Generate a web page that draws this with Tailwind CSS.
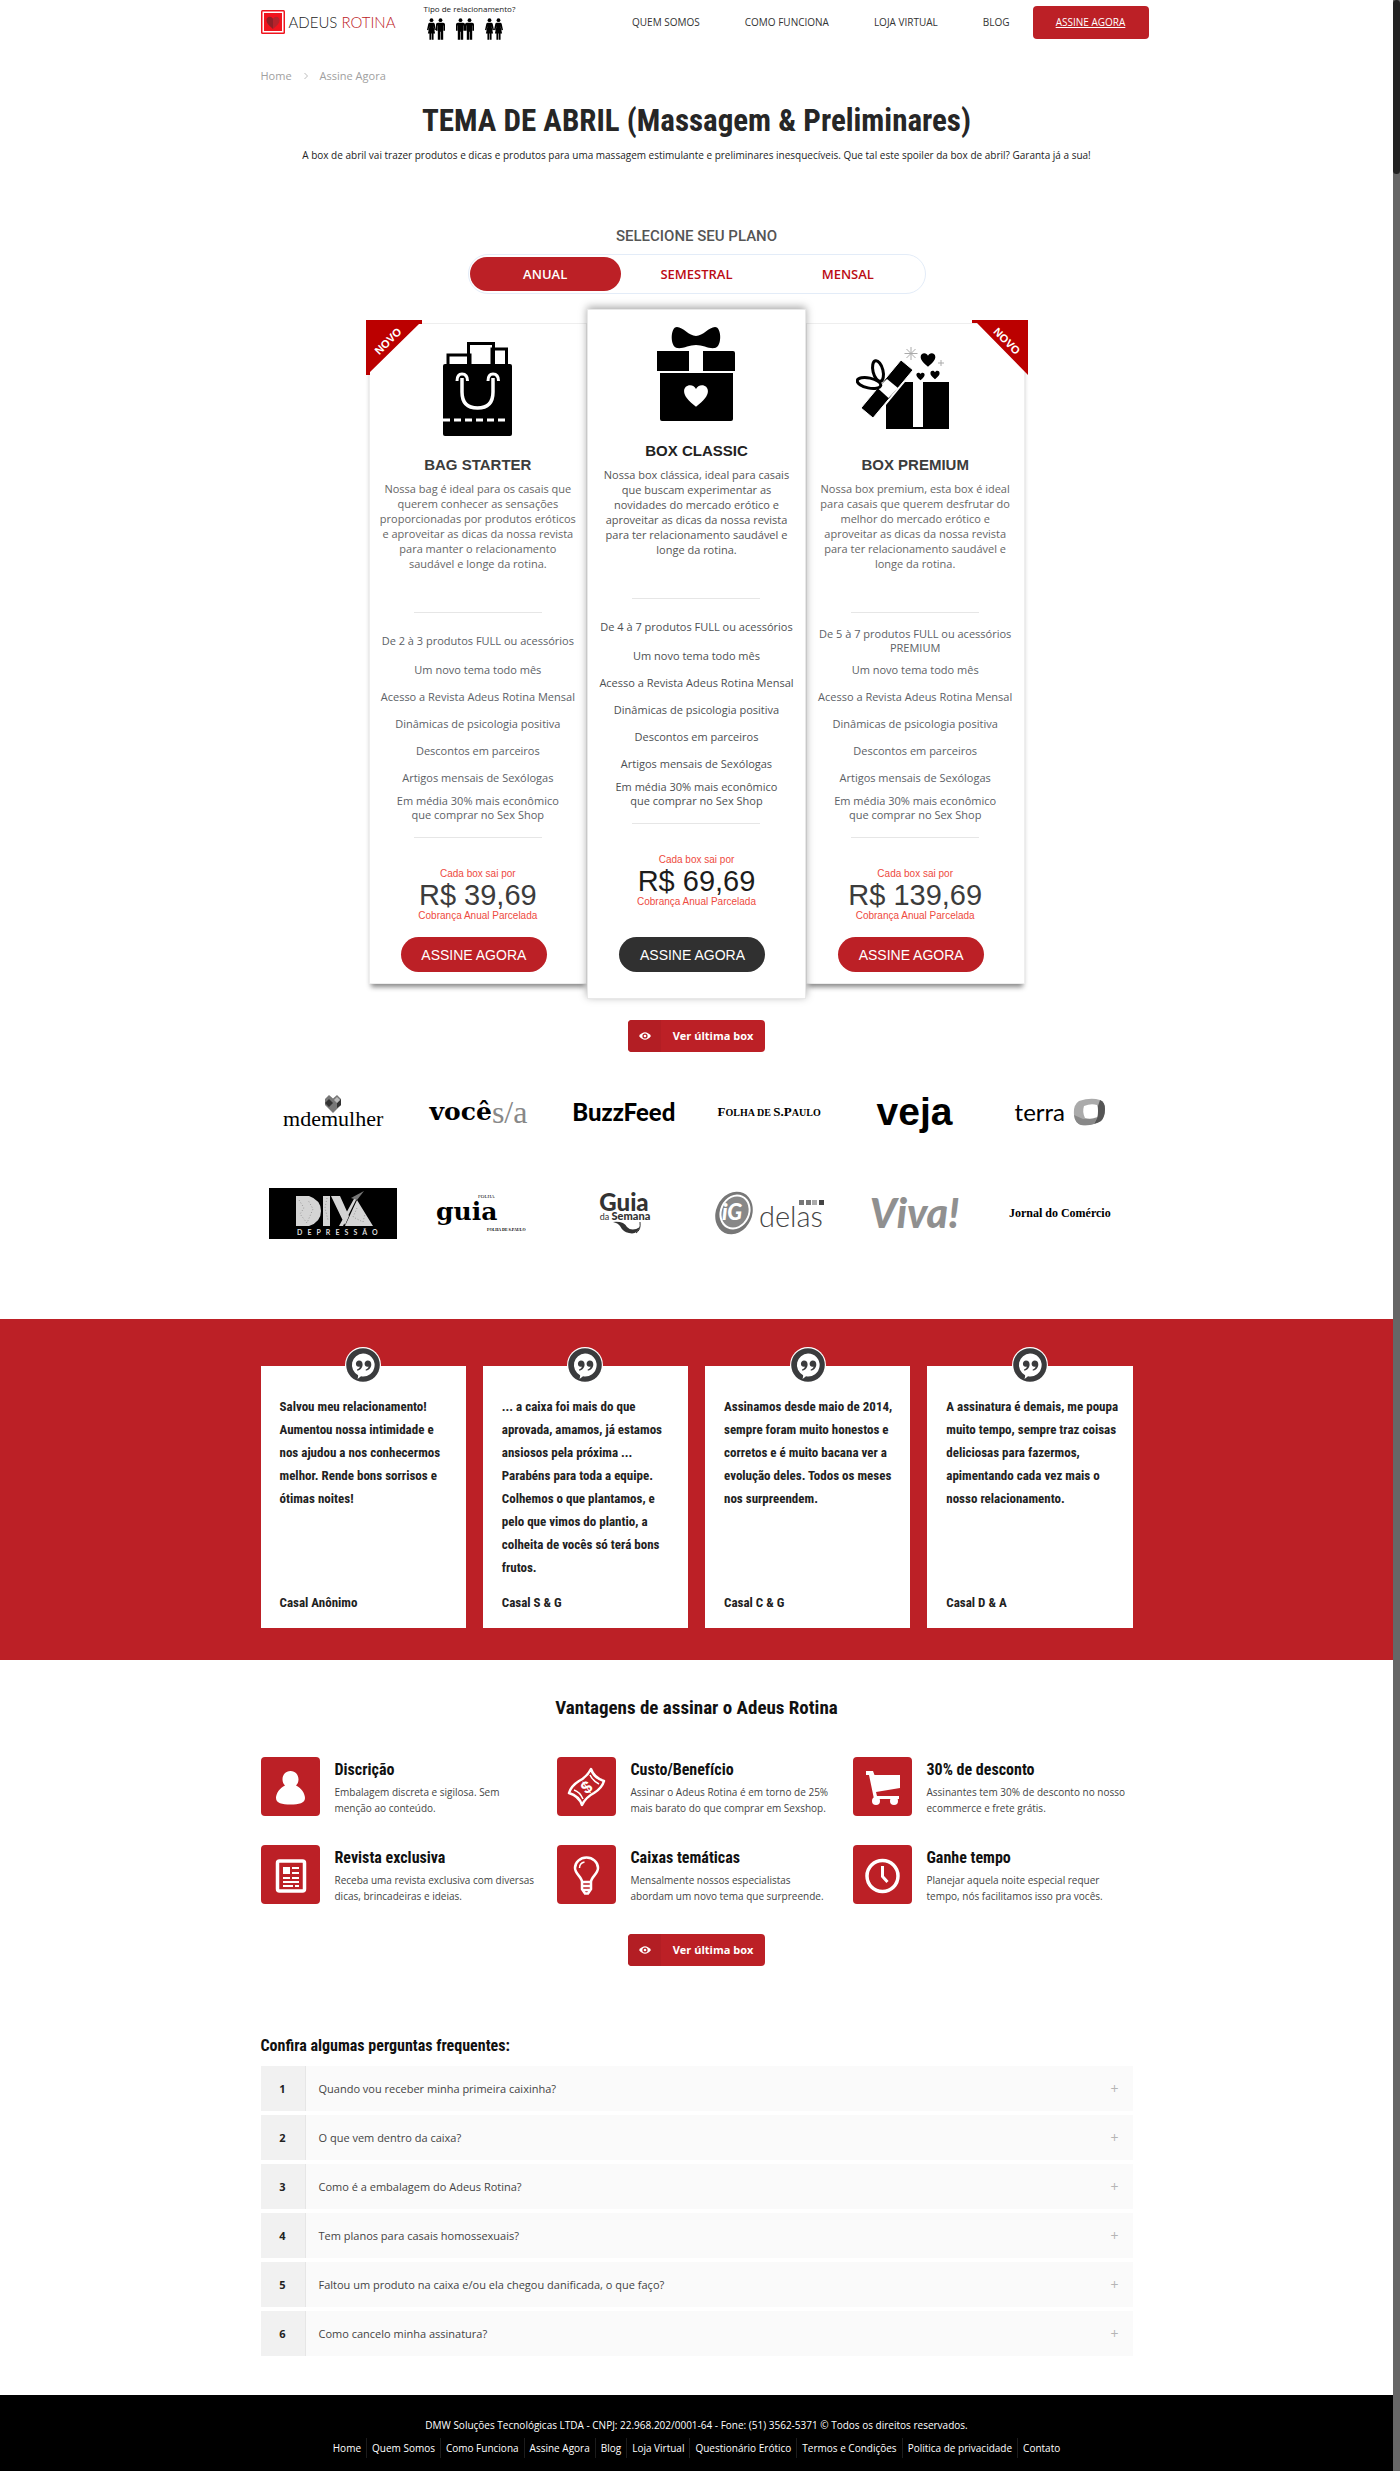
<!DOCTYPE html>
<html lang="pt-BR">
<head>
<meta charset="utf-8">
<meta name="viewport" content="width=device-width, initial-scale=1">
<title>Assine Agora - Adeus Rotina</title>
<script src="https://cdn.jsdelivr.net/npm/@tailwindcss/browser@4"></script>
</head>
<body class="flex bg-white font-['Open_Sans',sans-serif] text-[11px] leading-4 text-[#444]">

<svg class="hidden" aria-hidden="true">
  <symbol id="man" viewBox="0 0 10 24"><circle cx="5" cy="2.2" r="2.1"/><path d="M2 5h6q2 0 2 2v7H8.300V8H8v16H5.300v-9h-.6v9H2V8h-.3v6H0V7q0-2 2-2z"/></symbol>
  <symbol id="woman" viewBox="0 0 10 24"><circle cx="5" cy="2.200" r="2.100"/><path d="M3 5h4q1.200 0 1.600 1.500L10 13l-1.500.5L7 8l2 9H7.300v7H5.300v-7h-.6v7h-2v-7H1L3 8l-1.500 5.500L0 13l1.400-6.500Q1.800 5 3 5z"/></symbol>
  <symbol id="eye" viewBox="0 0 12 8"><path d="M0 4Q6-3.500 12 4 6 11.500 0 4z" fill="#fff"/><circle cx="6" cy="4" r="2.600" fill="#b31e24"/><circle cx="6" cy="4" r="1.300" fill="#fff"/></symbol>
  <symbol id="heart" viewBox="0 0 24 24"><path d="M12 22C5 16 1 12 1 7.500 1 4 3.500 2 6.500 2 9 2 11 3.500 12 5.500 13 3.500 15 2 17.500 2 20.500 2 23 4 23 7.500 23 12 19 16 12 22z"/></symbol>
  <symbol id="quote" viewBox="0 0 36 36"><circle cx="18" cy="18" r="18" fill="#fff"/><circle cx="18" cy="18" r="16.800" fill="#3a3b3d"/><path d="M18 6.500a11.500 11.500 0 1 1-2 22.800Q14 31 12.500 32q.8-2 .6-3.800A11.500 11.500 0 0 1 18 6.500z" fill="#fff"/><path d="M14 13.500c2.300 0 3.600 1.600 3.600 3.900 0 3.200-2.500 5.800-5.600 6.200v-1.200c1.700-.5 2.700-1.600 2.900-3-.3.200-.8.300-1.300.3-1.500 0-2.700-1.300-2.700-3s1.400-3.200 3.100-3.200zM22.700 13.500c2.300 0 3.600 1.600 3.600 3.900 0 3.200-2.500 5.800-5.600 6.200v-1.200c1.700-.5 2.700-1.600 2.900-3-.3.200-.8.300-1.300.3-1.500 0-2.700-1.300-2.700-3s1.400-3.200 3.100-3.200z" fill="#3a3b3d"/></symbol>
</svg>

<div class="min-w-0 flex-1">
  <header class="mx-auto flex h-11 max-w-[872px] items-center">
    <a href="#" class="flex items-center gap-1 font-['Lato',sans-serif] text-[15px] font-light text-[#222]">
      <svg class="size-6" viewBox="0 0 24 24"><rect width="24" height="24" rx="1.500" fill="#f0141e"/><rect x="1.500" y="1.500" width="21" height="21" fill="#fff"/><rect x="3" y="3" width="18" height="18" fill="#f0141e"/><path d="M12 19C7 15 5.500 12.500 5.500 10c0-2 1.400-3.300 3.200-3.300 1.500 0 2.600.8 3.300 2.100z" fill="#8f2027"/><path d="M12 19c5-4 6.500-6.500 6.500-9 0-2-1.400-3.300-3.200-3.300-1.500 0-2.600.8-3.300 2.100z" fill="#b5232b"/></svg>
      <span class="whitespace-nowrap">ADEUS <span class="text-[#bc2026]">ROTINA</span></span>
    </a>
    <a href="#" class="ml-7 flex flex-col items-start text-[8px] leading-[10px] whitespace-nowrap text-[#222]">
      Tipo de relacionamento?
      <span class="mt-[3px] ml-[3px] flex gap-[11px] text-black">
        <span class="flex"><svg class="h-6 w-[9px]" fill="currentColor"><use href="#woman"/></svg><svg class="h-6 w-[9px]" fill="currentColor"><use href="#man"/></svg></span>
        <span class="flex"><svg class="h-6 w-[9px]" fill="currentColor"><use href="#man"/></svg><svg class="h-6 w-[9px]" fill="currentColor"><use href="#man"/></svg></span>
        <span class="flex"><svg class="h-6 w-[9px]" fill="currentColor"><use href="#woman"/></svg><svg class="h-6 w-[9px]" fill="currentColor"><use href="#woman"/></svg></span>
      </span>
    </a>
    <nav class="-mr-4 ml-auto flex items-center text-[10px] whitespace-nowrap text-[#333]">
      <a href="#" class="mr-[45px]">QUEM SOMOS</a>
      <a href="#" class="mr-[45px]">COMO FUNCIONA</a>
      <a href="#" class="mr-[45px]">LOJA VIRTUAL</a>
      <a href="#" class="mr-[23px]">BLOG</a>
      <a href="#" class="flex h-[33px] w-[116px] items-center justify-center rounded bg-[#bc2026] text-white underline">ASSINE AGORA</a>
    </nav>
  </header>

  <main>
    <nav class="mx-auto mt-6 flex max-w-[872px] items-center text-[#a0a0a0]" aria-label="Caminho">
      <a href="#">Home</a>
      <svg class="mx-3 h-2 w-1" viewBox="0 0 4 8" fill="none" stroke="#bbb"><path d="M.5 1l3 3-3 3"/></svg>
      <a href="#">Assine Agora</a>
    </nav>

    <h1 class="mt-[17px] text-center font-['Liberation_Sans_Narrow','Roboto_Condensed','Open_Sans',sans-serif] text-[31px] leading-10 font-bold text-[#262626]">TEMA DE ABRIL (Massagem &amp; Preliminares)</h1>
    <p class="mt-1 text-center text-[10px] leading-5 text-[#222]">A box de abril vai trazer produtos e dicas e produtos para uma massagem estimulante e preliminares inesquecíveis. Que tal este spoiler da box de abril? Garanta já a sua!</p>

    <h2 class="mt-[61px] text-center font-['Roboto',sans-serif] text-[15px] leading-5 font-medium text-[#555]">SELECIONE SEU PLANO</h2>
    <div class="mx-auto mt-2 grid h-10 w-[458px] grid-cols-3 items-center rounded-full border border-[#e3ecf8] px-px font-['Open_Sans',sans-serif] text-[13px] font-semibold text-[#bb0c14]">
      <button class="h-[34px] rounded-full bg-[#bc2026] text-white">ANUAL</button>
      <button class="h-[34px] rounded-full">SEMESTRAL</button>
      <button class="h-[34px] rounded-full">MENSAL</button>
    </div>

    <section class="mx-auto mt-[15px] grid w-[656px] grid-cols-3 items-start text-center">
      <article class="relative mt-[14px] flex flex-col items-center border border-[#eee] bg-white pt-[18px] pb-[11px] shadow-[0_5px_5px_-2px_#888]">
        <svg class="absolute -top-1 -left-1 size-14" viewBox="0 0 56 56"><path d="M0 0h56v4h-3L4 52v3H0z" fill="#bb0000"/><text x="22" y="25" transform="rotate(-45 22 21)" text-anchor="middle" font-family="Liberation Sans" font-size="11" font-weight="700" fill="#fff">NOVO</text></svg>
        <svg class="h-[94px] w-[70px]" viewBox="0 0 70 94"><g fill="#fff" stroke="#000" stroke-width="3"><path d="M5 24V13h22v11M49 24V7h14.500v17M25.500 24V1.500h25V24"/></g><rect y="22" width="69" height="72" rx="2"/><g fill="none" stroke="#fff" stroke-width="3"><path d="M14 39q0-7 5-7 5.500 0 5.500 7M45 39q0-7 5-7 5.500 0 5.500 7"/><path d="M19 36v14q0 16 15.500 16T50 50V36" stroke-width="3.500"/><path d="M0 78h64" stroke-dasharray="7 4"/></g></svg>
        <h3 class="mt-[19px] font-['Liberation_Sans',sans-serif] text-[15px] leading-5 font-bold text-[#3c3c3c]">BAG STARTER</h3>
        <p class="mt-[6px] w-full px-2 leading-[15px] text-[#666]">Nossa bag é ideal para os casais que<br>querem conhecer as sensações<br>proporcionadas por produtos eróticos<br>e aproveitar as dicas da nossa revista<br>para manter o relacionamento<br>saudável e longe da rotina.</p>
        <hr class="mt-[41px] w-32 border-[#e6e6e6]">
        <ul class="w-full pt-3 leading-[14px] text-[#5c6166]">
          <li class="flex h-[31px] items-center justify-center">De 2 à 3 produtos FULL ou acessórios</li>
          <li class="flex h-[27px] items-center justify-center">Um novo tema todo mês</li>
          <li class="flex h-[27px] items-center justify-center whitespace-nowrap">Acesso a Revista Adeus Rotina Mensal</li>
          <li class="flex h-[27px] items-center justify-center">Dinâmicas de psicologia positiva</li>
          <li class="flex h-[27px] items-center justify-center">Descontos em parceiros</li>
          <li class="flex h-[27px] items-center justify-center">Artigos mensais de Sexólogas</li>
          <li class="flex h-[33px] items-center justify-center">Em média 30% mais econômico<br>que comprar no Sex Shop</li>
        </ul>
        <hr class="mt-[13px] w-32 border-[#e6e6e6]">
        <div class="mt-[29px] font-['Liberation_Sans',sans-serif] text-[10px] leading-[14px] text-[#ee4a3e]">
          <p>Cada box sai por</p>
          <p class="text-[29px] leading-7 text-[#3c3c3c]">R$ 39,69</p>
          <p>Cobrança Anual Parcelada</p>
        </div>
        <button class="mt-[14px] mr-2 h-[35px] w-[146px] rounded-full bg-[#bc2026] font-['Liberation_Sans',sans-serif] text-sm text-white">ASSINE AGORA</button>
      </article>

      <article class="relative z-10 flex flex-col items-center border border-[#e8e8e8] bg-white pt-[16px] pb-[26px] shadow-[0_-2px_8px_rgb(0_0_0/0.35)]">
        <svg class="h-24 w-20" viewBox="0 0 80 96"><path d="M40 10C33 10 27 1 21 1c-7 0-7 20 0 21 6 1 12-3 19-3s13 4 19 3c7-1 7-21 0-21-6 0-12 9-19 9z"/><path d="M1 25h32v20H1zM47 25h30q2 0 2 2v18H47zM4 47h73v46q0 2-2 2H6q-2 0-2-2z"/><use href="#heart" x="27" y="57" width="26" height="26" fill="#fff"/></svg>
        <h3 class="mt-[19px] font-['Liberation_Sans',sans-serif] text-[15px] leading-5 font-bold text-[#222]">BOX CLASSIC</h3>
        <p class="mt-[6px] w-full px-2 leading-[15px] text-[#555]">Nossa box clássica, ideal para casais<br>que buscam experimentar as<br>novidades do mercado erótico e<br>aproveitar as dicas da nossa revista<br>para ter relacionamento saudável e<br>longe da rotina.</p>
        <hr class="mt-[41px] w-32 border-[#e6e6e6]">
        <ul class="w-full pt-3 leading-[14px] text-[#4c4f52]">
          <li class="flex h-[31px] items-center justify-center">De 4 à 7 produtos FULL ou acessórios</li>
          <li class="flex h-[27px] items-center justify-center">Um novo tema todo mês</li>
          <li class="flex h-[27px] items-center justify-center whitespace-nowrap">Acesso a Revista Adeus Rotina Mensal</li>
          <li class="flex h-[27px] items-center justify-center">Dinâmicas de psicologia positiva</li>
          <li class="flex h-[27px] items-center justify-center">Descontos em parceiros</li>
          <li class="flex h-[27px] items-center justify-center">Artigos mensais de Sexólogas</li>
          <li class="flex h-[33px] items-center justify-center">Em média 30% mais econômico<br>que comprar no Sex Shop</li>
        </ul>
        <hr class="mt-[13px] w-32 border-[#e6e6e6]">
        <div class="mt-[29px] font-['Liberation_Sans',sans-serif] text-[10px] leading-[14px] text-[#ee4a3e]">
          <p>Cada box sai por</p>
          <p class="text-[29px] leading-7 text-[#1c1c1c]">R$ 69,69</p>
          <p>Cobrança Anual Parcelada</p>
        </div>
        <button class="mt-7 mr-2 h-[35px] w-[146px] rounded-full bg-[#303030] font-['Liberation_Sans',sans-serif] text-sm text-white">ASSINE AGORA</button>
      </article>

      <article class="relative mt-[14px] flex flex-col items-center border border-[#eee] bg-white pt-[18px] pb-[11px] shadow-[0_5px_5px_-2px_#888]">
        <svg class="absolute -top-1 -right-1 size-14" viewBox="0 0 56 56"><path d="M0 0h56v55L5 3H0z" fill="#bb0000"/><text x="35" y="25" transform="rotate(45 35 21)" text-anchor="middle" font-family="Liberation Sans" font-size="11" font-weight="700" fill="#fff">NOVO</text></svg>
        <svg class="mr-6 h-[94px] w-[94px]" viewBox="0 0 94 94"><path d="M30 87V63l19-23h44v47z"/><path d="M57 40h10v45H57z" fill="#fff"/><path d="M5 66L45 18l12 10-40 48z" stroke="#fff" stroke-width="1"/><path d="M21.500 46l9.500-9 11 9-9.500 10z" fill="#fff"/><g fill="none" stroke="#000" stroke-width="3"><ellipse cx="22" cy="29" rx="5" ry="10.500" transform="rotate(-14 22 29)"/><ellipse cx="13" cy="41" rx="12" ry="5" transform="rotate(12 13 41)"/></g><use href="#heart" x="64" y="10" width="16" height="16"/><use href="#heart" x="60" y="30" width="9" height="9"/><use href="#heart" x="74" y="28" width="10" height="10"/><g stroke="#aaa" stroke-width="1"><path d="M55 5v13M48.500 11.500h13M50.500 7l9 9M50.500 16l9-9M85 18v6M82 21h6"/></g></svg>
        <h3 class="mt-[19px] font-['Liberation_Sans',sans-serif] text-[15px] leading-5 font-bold text-[#3c3c3c]">BOX PREMIUM</h3>
        <p class="mt-[6px] w-full px-2 leading-[15px] text-[#666]">Nossa box premium, esta box é ideal<br>para casais que querem desfrutar do<br>melhor do mercado erótico e<br>aproveitar as dicas da nossa revista<br>para ter relacionamento saudável e<br>longe da rotina.</p>
        <hr class="mt-[41px] w-32 border-[#e6e6e6]">
        <ul class="w-full pt-3 leading-[14px] text-[#5c6166]">
          <li class="flex h-[31px] items-center justify-center">De 5 à 7 produtos FULL ou acessórios<br>PREMIUM</li>
          <li class="flex h-[27px] items-center justify-center">Um novo tema todo mês</li>
          <li class="flex h-[27px] items-center justify-center whitespace-nowrap">Acesso a Revista Adeus Rotina Mensal</li>
          <li class="flex h-[27px] items-center justify-center">Dinâmicas de psicologia positiva</li>
          <li class="flex h-[27px] items-center justify-center">Descontos em parceiros</li>
          <li class="flex h-[27px] items-center justify-center">Artigos mensais de Sexólogas</li>
          <li class="flex h-[33px] items-center justify-center">Em média 30% mais econômico<br>que comprar no Sex Shop</li>
        </ul>
        <hr class="mt-[13px] w-32 border-[#e6e6e6]">
        <div class="mt-[29px] font-['Liberation_Sans',sans-serif] text-[10px] leading-[14px] text-[#ee4a3e]">
          <p>Cada box sai por</p>
          <p class="text-[29px] leading-7 text-[#3c3c3c]">R$ 139,69</p>
          <p>Cobrança Anual Parcelada</p>
        </div>
        <button class="mt-[14px] mr-2 h-[35px] w-[146px] rounded-full bg-[#bc2026] font-['Liberation_Sans',sans-serif] text-sm text-white">ASSINE AGORA</button>
      </article>
    </section>

    <a href="#" class="mx-auto mt-[21px] flex h-8 w-[137px] overflow-hidden rounded bg-[#bc2026] leading-8 font-bold text-white">
      <span class="flex w-[33px] items-center justify-center bg-[#b31e24]"><svg class="h-2 w-3"><use href="#eye"/></svg></span>
      <span class="flex-1 text-center">Ver última box</span>
    </a>

    <section class="mx-auto mt-[30px] grid max-w-[872px] grid-cols-6 gap-y-[41px] whitespace-nowrap text-black" aria-label="Na mídia">
      <div class="flex h-[60px] flex-col items-center justify-center font-['Liberation_Serif',serif] text-[22px] leading-5">
        <svg class="-mb-1 h-[18px] w-4" viewBox="0 0 16 18"><path d="M4 0l4 3.500L12 0l4 4v6l-8 8-8-8V4z" fill="#777"/><path d="M4 4l4 4-4 4-4-4zM12 8l4-4v6l-4 3z" fill="#333"/><path d="M12 2l3 3-3 3-3-3z" fill="#bbb"/></svg>
        <span>mdemulher</span>
      </div>
      <div class="flex h-[60px] items-center justify-center font-['DejaVu_Serif',serif] text-[25px] font-bold">você<span class="font-['Liberation_Serif',serif] text-[32px] font-normal text-[#888]">s/a</span></div>
      <div class="flex h-[60px] items-center justify-center font-['Lato',sans-serif] text-2xl font-black">BuzzFeed</div>
      <div class="flex h-[60px] items-center justify-center font-['Liberation_Serif',serif] text-[13px] font-bold"><span>F<span class="text-[10px]">OLHA DE </span>S.P<span class="text-[10px]">AULO</span></span></div>
      <div class="flex h-[60px] items-center justify-center font-['Liberation_Sans',sans-serif] text-[39px] leading-8 font-bold">veja</div>
      <div class="flex h-[60px] items-center justify-center gap-2 font-['Lato',sans-serif] text-2xl">terra
        <svg class="h-7 w-8" viewBox="0 0 32 28"><path d="M6 3Q18-1 27 2q5 2 5 9 0 8-4 12-8 5-20 4Q2 25 1 17 0 7 6 3z" fill="#aaa"/><path d="M27 2q5 2 5 9 0 8-4 12-3 2-7 3l4-8V8z" fill="#555"/><path d="M8 27Q2 25 1 17l9 4 14-1-3 6q-6 2-13 1z" fill="#888"/><path d="M11 8q7-3 13-1 2 6 0 12-6 3-12 1-3-6-1-12z" fill="#fff"/></svg>
      </div>
      <div class="flex h-[60px] items-center justify-center">
        <svg class="h-[51px] w-32" viewBox="0 0 128 51"><rect width="128" height="51" fill="#000"/><g fill="#d4d4d4"><path d="M27 8h13q12 4 12 15T40 38H27zM54 8h7v30h-7zM62 8h9l9 20-4 9zM90 6L74 38h-4L86 9zM88 12l16 26H76z"/></g><path d="M30 12l5 8-4 6 7 9 6-14-5-9M58 10l-2 10 3 12M88 20l-4 9 10 5 2-8" stroke="#999" fill="none" stroke-dasharray="1 2"/><path d="M82 10l13-7-7 9z" fill="#777"/><text x="28" y="47" fill="#ddd" font-family="Lato" font-size="7" font-weight="700" xml:space="preserve">D   E   P   R   E   S   S   Ã   O</text></svg>
      </div>
      <div class="flex h-[60px] items-center justify-center">
        <svg class="h-12 w-24" viewBox="0 0 96 48"><text x="6" y="31" font-family="DejaVu Serif" font-size="25" font-weight="700">guia</text><text x="48" y="9" font-family="Liberation Serif" font-size="5">FOLHA</text><text x="57" y="42" font-family="Liberation Serif" font-size="4" font-weight="700">FOLHA DE S.PAULO</text></svg>
      </div>
      <div class="flex h-[60px] items-center justify-center">
        <svg class="h-12 w-20" viewBox="0 0 80 48" fill="#333"><text x="40" y="22" text-anchor="middle" font-family="Lato" font-size="24" font-weight="900">Guia</text><text x="41" y="31" text-anchor="middle" font-family="Lato" font-size="9"><tspan>da </tspan><tspan font-size="11" font-weight="900">Semana</tspan></text><path d="M29 33q11-1 14 5 5 5 13 0-3 8-11 6-6-1-9-7-2-3-7-4z"/><path d="M56 33q1 8-4 11" fill="none" stroke="#333"/></svg>
      </div>
      <div class="flex h-[60px] items-center justify-center">
        <svg class="h-11 w-28" viewBox="0 0 112 44"><ellipse cx="21" cy="22" rx="18" ry="22" transform="rotate(25 21 22)" fill="#777"/><ellipse cx="22" cy="21" rx="15" ry="18" transform="rotate(25 22 21)" fill="#fff"/><ellipse cx="22" cy="21" rx="13" ry="16" transform="rotate(25 22 21)" fill="#888"/><text x="9" y="29" font-family="Lato" font-size="22" font-style="italic" font-weight="900" fill="#fff">iG</text><text x="46" y="36" font-family="Lato" font-size="29" font-weight="300" fill="#444">delas</text><path d="M86 9h5v5h-5zM93 9h5v5h-5z" fill="#777"/><path d="M99 9h5v5h-5z" fill="#aaa"/><path d="M106 9h5v5h-5z" fill="#444"/></svg>
      </div>
      <div class="flex h-[60px] items-center justify-center font-['Lato',sans-serif] text-[41px] leading-10 font-black text-[#909090] italic">Viva!</div>
      <div class="flex h-[60px] items-center justify-center font-['Liberation_Serif',serif] text-xs font-bold">Jornal do Comércio</div>
    </section>

    <section class="mt-[76px] bg-[#bc2026] pt-[47px] pb-8">
      <div class="mx-auto grid max-w-[872px] grid-cols-4 gap-[17px] font-['Liberation_Sans_Narrow','Roboto_Condensed','Open_Sans',sans-serif] text-[13px] leading-[23px] font-bold text-[#222]">
        <figure class="relative flex min-h-[262px] flex-col bg-white pt-[29px] pr-2 pb-[14px] pl-[19px]">
          <svg class="absolute -top-[19px] left-1/2 size-9 -translate-x-1/2"><use href="#quote"/></svg>
          <blockquote class="flex-1">Salvou meu relacionamento!<br>Aumentou nossa intimidade e<br>nos ajudou a nos conhecermos<br>melhor. Rende bons sorrisos e<br>ótimas noites!</blockquote>
          <figcaption>Casal Anônimo</figcaption>
        </figure>
        <figure class="relative flex min-h-[262px] flex-col bg-white pt-[29px] pr-2 pb-[14px] pl-[19px]">
          <svg class="absolute -top-[19px] left-1/2 size-9 -translate-x-1/2"><use href="#quote"/></svg>
          <blockquote class="flex-1">... a caixa foi mais do que<br>aprovada, amamos, já estamos<br>ansiosos pela próxima ...<br>Parabéns para toda a equipe.<br>Colhemos o que plantamos, e<br>pelo que vimos do plantio, a<br>colheita de vocês só terá bons<br>frutos.</blockquote>
          <figcaption>Casal S &amp; G</figcaption>
        </figure>
        <figure class="relative flex min-h-[262px] flex-col bg-white pt-[29px] pr-2 pb-[14px] pl-[19px]">
          <svg class="absolute -top-[19px] left-1/2 size-9 -translate-x-1/2"><use href="#quote"/></svg>
          <blockquote class="flex-1">Assinamos desde maio de 2014,<br>sempre foram muito honestos e<br>corretos e é muito bacana ver a<br>evolução deles. Todos os meses<br>nos surpreendem.</blockquote>
          <figcaption>Casal C &amp; G</figcaption>
        </figure>
        <figure class="relative flex min-h-[262px] flex-col bg-white pt-[29px] pr-2 pb-[14px] pl-[19px]">
          <svg class="absolute -top-[19px] left-1/2 size-9 -translate-x-1/2"><use href="#quote"/></svg>
          <blockquote class="flex-1">A assinatura é demais, me poupa<br>muito tempo, sempre traz coisas<br>deliciosas para fazermos,<br>apimentando cada vez mais o<br>nosso relacionamento.</blockquote>
          <figcaption>Casal D &amp; A</figcaption>
        </figure>
      </div>
    </section>

    <h2 class="mt-[34px] text-center font-['Liberation_Sans_Narrow','Roboto_Condensed','Open_Sans',sans-serif] text-[19px] leading-7 font-bold text-[#111]">Vantagens de assinar o Adeus Rotina</h2>
    <section class="mx-auto mt-[35px] grid max-w-[872px] grid-cols-[296px_296px_1fr] gap-y-[29px] text-[10px] text-[#444]">
      <div class="flex h-[59px] gap-[15px]">
        <svg class="size-[59px] shrink-0 rounded bg-[#bc2026]" viewBox="0 0 59 59" fill="#fff"><path d="M29.500 14c5 0 8 4 8 8.500 0 2.500-1 4.500-2.500 6 5 2 9 8 9 12.500 0 5-6 6.500-14.500 6.500S15 46 15 41c0-4.500 4-10.500 9-12.500-1.500-1.500-2.500-3.500-2.500-6 0-4.500 3-8.500 8-8.500z"/></svg>
        <div><h3 class="mt-[3px] font-['Liberation_Sans_Narrow','Roboto_Condensed','Open_Sans',sans-serif] text-base leading-5 font-bold text-[#111]">Discrição</h3><p class="mt-1 whitespace-nowrap">Embalagem discreta e sigilosa. Sem<br>menção ao conteúdo.</p></div>
      </div>
      <div class="flex h-[59px] gap-[15px]">
        <svg class="size-[59px] shrink-0 rounded bg-[#bc2026]" viewBox="0 0 59 59" fill="none" stroke="#fff" stroke-width="2.500" stroke-linejoin="round"><path d="M34 12q3 9 13 12-2 7-10 12-8 4-12 12-3-9-13-12 2-7 10-12 8-4 12-12z"/><path d="M33 18q3 6 9 9M17 33q6 2 9 9" stroke-width="1.500"/><text x="29.500" y="36" transform="rotate(-35 29.500 30)" text-anchor="middle" font-family="Liberation Sans" font-size="17" font-weight="700" fill="#fff" stroke="none">$</text></svg>
        <div><h3 class="mt-[3px] font-['Liberation_Sans_Narrow','Roboto_Condensed','Open_Sans',sans-serif] text-base leading-5 font-bold text-[#111]">Custo/Benefício</h3><p class="mt-1 whitespace-nowrap">Assinar o Adeus Rotina é em torno de 25%<br>mais barato do que comprar em Sexshop.</p></div>
      </div>
      <div class="flex h-[59px] gap-[15px]">
        <svg class="size-[59px] shrink-0 rounded bg-[#bc2026]" viewBox="0 0 59 59" fill="#fff"><path d="M13 14h7l1.500 4H47v13L23 35l1 4h22v3H21L16 18h-3z"/><circle cx="23" cy="44" r="4"/><circle cx="41" cy="44" r="4"/></svg>
        <div><h3 class="mt-[3px] font-['Liberation_Sans_Narrow','Roboto_Condensed','Open_Sans',sans-serif] text-base leading-5 font-bold text-[#111]">30% de desconto</h3><p class="mt-1 whitespace-nowrap">Assinantes tem 30% de desconto no nosso<br>ecommerce e frete grátis.</p></div>
      </div>
      <div class="flex h-[59px] gap-[15px]">
        <svg class="size-[59px] shrink-0 rounded bg-[#bc2026]" viewBox="0 0 59 59" fill="none" stroke="#fff"><rect x="16.500" y="16" width="27" height="30" rx="2" stroke-width="3.500"/><path d="M22 22h7v7h-7z" fill="#fff" stroke="none"/><path d="M31 23h7M31 28h7M22 33h7M31 33h7M22 37h16M22 41h10M34 41h4" stroke-width="2"/></svg>
        <div><h3 class="mt-[3px] font-['Liberation_Sans_Narrow','Roboto_Condensed','Open_Sans',sans-serif] text-base leading-5 font-bold text-[#111]">Revista exclusiva</h3><p class="mt-1 whitespace-nowrap">Receba uma revista exclusiva com diversas<br>dicas, brincadeiras e ideias.</p></div>
      </div>
      <div class="flex h-[59px] gap-[15px]">
        <svg class="size-[59px] shrink-0 rounded bg-[#bc2026]" viewBox="0 0 59 59" fill="none" stroke="#fff" stroke-width="2.500"><path d="M25 37c0-5-7-8-7-14a11.500 10.500 0 0 1 23 0c0 6-7 9-7 14zM25 38v6l3 4.500h3l3-4.500v-6M25 41h9M26 45h7"/><path d="M22.500 23q0-5 5-6" stroke-width="1.500"/></svg>
        <div><h3 class="mt-[3px] font-['Liberation_Sans_Narrow','Roboto_Condensed','Open_Sans',sans-serif] text-base leading-5 font-bold text-[#111]">Caixas temáticas</h3><p class="mt-1 whitespace-nowrap">Mensalmente nossos especialistas<br>abordam um novo tema que surpreende.</p></div>
      </div>
      <div class="flex h-[59px] gap-[15px]">
        <svg class="size-[59px] shrink-0 rounded bg-[#bc2026]" viewBox="0 0 59 59" fill="none" stroke="#fff"><circle cx="29.500" cy="31" r="15.500" stroke-width="3.500"/><path d="M29.500 21v10.500l5 5.500" stroke-width="3"/></svg>
        <div><h3 class="mt-[3px] font-['Liberation_Sans_Narrow','Roboto_Condensed','Open_Sans',sans-serif] text-base leading-5 font-bold text-[#111]">Ganhe tempo</h3><p class="mt-1 whitespace-nowrap">Planejar aquela noite especial requer<br>tempo, nós facilitamos isso pra vocês.</p></div>
      </div>
    </section>

    <a href="#" class="mx-auto mt-[30px] flex h-8 w-[137px] overflow-hidden rounded bg-[#bc2026] leading-8 font-bold text-white">
      <span class="flex w-[33px] items-center justify-center bg-[#b31e24]"><svg class="h-2 w-3"><use href="#eye"/></svg></span>
      <span class="flex-1 text-center">Ver última box</span>
    </a>

    <section class="mx-auto mt-[68px] max-w-[872px]">
      <h2 class="font-['Liberation_Sans_Narrow','Roboto_Condensed','Open_Sans',sans-serif] text-base leading-6 font-bold text-[#111]">Confira algumas perguntas frequentes:</h2>
      <div class="mt-2 flex flex-col gap-1 text-[#444]">
        <button class="flex h-[45px] w-full items-center bg-[#fafafa] text-left"><span class="flex h-full w-[45px] items-center justify-center border-r border-[#e6e6e6] bg-[#f1f1f1] font-bold text-[#222]">1</span><span class="ml-[13px] flex-1">Quando vou receber minha primeira caixinha?</span><span class="mr-[14px] text-sm text-[#b5b5b5]">+</span></button>
        <button class="flex h-[45px] w-full items-center bg-[#fafafa] text-left"><span class="flex h-full w-[45px] items-center justify-center border-r border-[#e6e6e6] bg-[#f1f1f1] font-bold text-[#222]">2</span><span class="ml-[13px] flex-1">O que vem dentro da caixa?</span><span class="mr-[14px] text-sm text-[#b5b5b5]">+</span></button>
        <button class="flex h-[45px] w-full items-center bg-[#fafafa] text-left"><span class="flex h-full w-[45px] items-center justify-center border-r border-[#e6e6e6] bg-[#f1f1f1] font-bold text-[#222]">3</span><span class="ml-[13px] flex-1">Como é a embalagem do Adeus Rotina?</span><span class="mr-[14px] text-sm text-[#b5b5b5]">+</span></button>
        <button class="flex h-[45px] w-full items-center bg-[#fafafa] text-left"><span class="flex h-full w-[45px] items-center justify-center border-r border-[#e6e6e6] bg-[#f1f1f1] font-bold text-[#222]">4</span><span class="ml-[13px] flex-1">Tem planos para casais homossexuais?</span><span class="mr-[14px] text-sm text-[#b5b5b5]">+</span></button>
        <button class="flex h-[45px] w-full items-center bg-[#fafafa] text-left"><span class="flex h-full w-[45px] items-center justify-center border-r border-[#e6e6e6] bg-[#f1f1f1] font-bold text-[#222]">5</span><span class="ml-[13px] flex-1">Faltou um produto na caixa e/ou ela chegou danificada, o que faço?</span><span class="mr-[14px] text-sm text-[#b5b5b5]">+</span></button>
        <button class="flex h-[45px] w-full items-center bg-[#fafafa] text-left"><span class="flex h-full w-[45px] items-center justify-center border-r border-[#e6e6e6] bg-[#f1f1f1] font-bold text-[#222]">6</span><span class="ml-[13px] flex-1">Como cancelo minha assinatura?</span><span class="mr-[14px] text-sm text-[#b5b5b5]">+</span></button>
      </div>
    </section>
  </main>

  <footer class="mt-[39px] bg-black pt-5 pb-[13px] text-center text-[10px] leading-5 text-white">
    <p>DMW Soluções Tecnológicas LTDA - CNPJ: 22.968.202/0001-64 - Fone: (51) 3562-5371 © Todos os direitos reservados.</p>
    <nav class="mt-[3px] flex justify-center divide-x divide-[#1c1c1c]">
      <a href="#" class="px-[5px]">Home</a>
      <a href="#" class="px-[5px]">Quem Somos</a>
      <a href="#" class="px-[5px]">Como Funciona</a>
      <a href="#" class="px-[5px]">Assine Agora</a>
      <a href="#" class="px-[5px]">Blog</a>
      <a href="#" class="px-[5px]">Loja Virtual</a>
      <a href="#" class="px-[5px]">Questionário Erótico</a>
      <a href="#" class="px-[5px]">Termos e Condições</a>
      <a href="#" class="px-[5px]">Politica de privacidade</a>
      <a href="#" class="px-[5px]">Contato</a>
    </nav>
  </footer>
</div>

<div class="w-[7px] shrink-0 bg-[#666]" aria-hidden="true"><div class="h-[174px] rounded-full bg-[#222]"></div></div>
</body>
</html>
